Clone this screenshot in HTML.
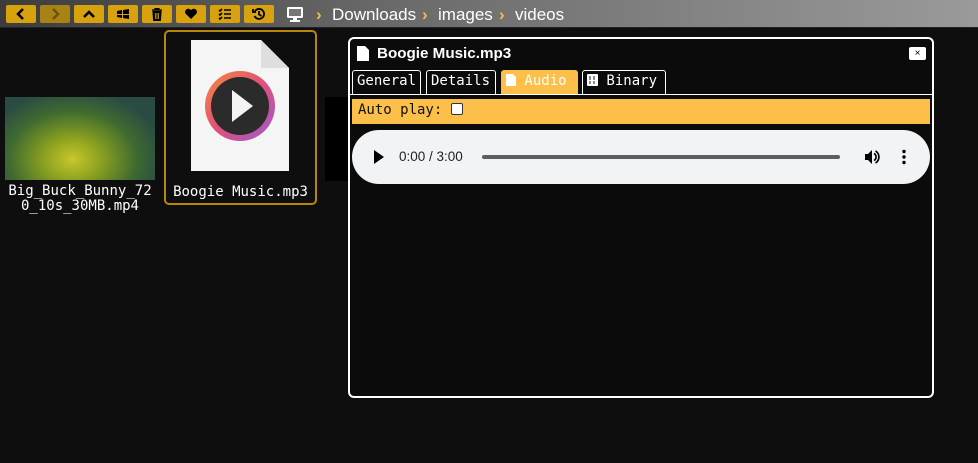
<!DOCTYPE html>
<html><head><style>
*{box-sizing:border-box;margin:0;padding:0}
body{width:978px;height:463px;background:#0e0e0e;overflow:hidden;position:relative;font-family:"Liberation Sans",sans-serif}
.bar{position:absolute;left:0;top:0;width:978px;height:28px;background:linear-gradient(90deg,#3c3c3c,#6a6a6a 40%,#8a8a8a 80%,#9a9a9a);border-bottom:1px solid #222}
.b{position:absolute;top:5px;width:30px;height:18px;background:#d8a20e;border-radius:2px;display:flex;align-items:center;justify-content:center}
.crumb{position:absolute;top:5px;color:#fff;font-size:17px}
.arr{position:absolute;top:5px;color:#f0c040;font-size:17px;font-weight:bold}
.mono{font-family:"DejaVu Sans Mono","Liberation Mono",monospace}
.dlg{position:absolute;left:348px;top:37px;width:586px;height:361px;border:2px solid #fff;border-radius:6px;background:#0b0b0b}
.tab{position:absolute;top:31px;height:24px;border:1px solid #fff;border-bottom:none;border-radius:3px 3px 0 0;color:#fff;font-size:14px;padding:2px 4px 0 4px;white-space:nowrap}
</style></head><body>
<div class="bar"></div>
<div class="b" style="left:6px"><svg width="10" height="12"><path d="M7 1L2 6L7 11" stroke="#000" stroke-width="2.5" fill="none"/></svg></div>
<div class="b" style="left:40px;background:#a88214"><svg width="10" height="12"><path d="M3 1L8 6L3 11" stroke="#6b5410" stroke-width="2.5" fill="none"/></svg></div>
<div class="b" style="left:74px"><svg width="12" height="10"><path d="M1 8L6 3L11 8" stroke="#000" stroke-width="2.5" fill="none"/></svg></div>
<div class="b" style="left:108px"><svg width="14" height="12"><path d="M1 3L6 2V6H1ZM7 2L13 1V6H7ZM1 7H6V10L1 9ZM7 7H13V11L7 10Z" fill="#000"/></svg></div>
<div class="b" style="left:142px"><svg width="12" height="13"><path d="M1 2H11M4 2V0.5H8V2M2 3.5H10L9.3 12.5H2.7Z" stroke="#000" stroke-width="1.2" fill="#000"/><path d="M4.5 5V11M6 5V11M7.5 5V11" stroke="#d8a20e" stroke-width="0.8"/></svg></div>
<div class="b" style="left:176px"><svg width="14" height="12"><path d="M7 11L1.5 5.5A3 3 0 0 1 7 2.3A3 3 0 0 1 12.5 5.5Z" fill="#000"/></svg></div>
<div class="b" style="left:210px"><svg width="14" height="12"><path d="M1 2L2 3L4 1M1 6L2 7L4 5M1 10L2 11L4 9M6 2H13M6 6H13M6 10H13" stroke="#000" stroke-width="1.6" fill="none"/></svg></div>
<div class="b" style="left:244px"><svg width="14" height="14"><path d="M3 4A5 5 0 1 1 2.5 9M1 2V5H4M7 4V7.5L9.5 9" stroke="#000" stroke-width="1.8" fill="none"/></svg></div>
<svg style="position:absolute;left:286px;top:6px" width="18" height="16"><rect x="1" y="1" width="16" height="11" rx="1.5" fill="#fff"/><rect x="3" y="3" width="12" height="7" fill="#777"/><rect x="7" y="12" width="4" height="2" fill="#fff"/><rect x="4" y="14" width="10" height="2" fill="#fff"/></svg>
<span class="arr" style="left:316px">›</span><span class="crumb" style="left:332px">Downloads</span>
<span class="arr" style="left:422px">›</span><span class="crumb" style="left:438px">images</span>
<span class="arr" style="left:499px">›</span><span class="crumb" style="left:515px">videos</span>

<div style="position:absolute;left:5px;top:97px;width:150px;height:83px;background:radial-gradient(ellipse at 45% 75%,#c8c82a 0,#8aa020 25%,#3e6a30 55%,#2a4a44 80%)"></div>
<div class="mono" style="position:absolute;left:0;top:184px;width:160px;text-align:center;color:#fff;font-size:14px;line-height:15px">Big_Buck_Bunny_72<br>0_10s_30MB.mp4</div>
<div style="position:absolute;left:325px;top:97px;width:25px;height:84px;background:#000"></div>

<div style="position:absolute;left:164px;top:30px;width:153px;height:175px;border:2px solid #b8860b;border-radius:5px"></div>
<svg style="position:absolute;left:191px;top:40px" width="99" height="132"><path d="M0 0H70L98 28V131H0Z" fill="#f5f5f5"/><path d="M70 0V28H98Z" fill="#dedede"/><defs><linearGradient id="g" x1="0" y1="0" x2="1" y2="1"><stop offset="0" stop-color="#f58a3a"/><stop offset=".5" stop-color="#e0507a"/><stop offset="1" stop-color="#9a5ad0"/></linearGradient></defs><circle cx="49" cy="66" r="35" fill="url(#g)"/><circle cx="49" cy="66" r="29" fill="#2b2b2b"/><path d="M41 50L62 66L41 82Z" fill="#f4f4f4"/></svg>
<div class="mono" style="position:absolute;left:164px;top:184px;width:153px;text-align:center;color:#fff;font-size:14px">Boogie Music.mp3</div>

<div class="dlg">
<svg style="position:absolute;left:7px;top:7px" width="12" height="15"><path d="M0 0H8L12 4V15H0Z" fill="#fff"/></svg>
<div style="position:absolute;left:27px;top:6px;color:#fff;font-weight:bold;font-size:15.2px">Boogie Music.mp3</div>
<div style="position:absolute;left:559px;top:8px;width:17px;height:13px;background:#fff;border-radius:2px;font-size:10px;text-align:center;line-height:13px">×</div>
<div class="tab mono" style="left:2px;width:69px">General</div>
<div class="tab mono" style="left:76px;width:70px">Details</div>
<div class="tab mono" style="left:151px;width:77px;background:#fbbf4a;color:#fff;border-color:#fbbf4a"><svg width="10" height="12" style="vertical-align:-1px"><path d="M0 0H7L10 3V12H0Z" fill="#fff"/></svg> Audio</div>
<div class="tab mono" style="left:232px;width:84px"><svg width="11" height="12" style="vertical-align:-1px"><rect width="11" height="12" rx="1" fill="#fff"/><path d="M3 2V6M7 2V6M3 7V10M7 7V10" stroke="#444" stroke-width="1.2"/></svg> Binary</div>
<div style="position:absolute;left:0;top:55px;width:582px;height:1px;background:#fff"></div>
<div class="mono" style="position:absolute;left:2px;top:60px;width:578px;height:25px;background:#fbbf4a;font-size:14px;padding:3px 0 0 6px;color:#111">Auto play: <span style="display:inline-block;width:12px;height:12px;border:1px solid #333;background:#fff;border-radius:2px;vertical-align:-1px"></span></div>
<div style="position:absolute;left:2px;top:91px;width:578px;height:54px;background:#f1f3f4;border-radius:27px">
<svg style="position:absolute;left:21px;top:20px" width="12" height="14"><path d="M1 0L11 7L1 14Z" fill="#000"/></svg>
<div style="position:absolute;left:47px;top:19px;font-size:13.5px;color:#222">0:00 / 3:00</div>
<div style="position:absolute;left:130px;top:25px;width:358px;height:4px;background:#5e5e5e;border-radius:2px"></div>
<svg style="position:absolute;left:512px;top:19px" width="16" height="16"><path d="M1 5H4L8 1V15L4 11H1Z" fill="#000"/><path d="M10 4.5A4 4 0 0 1 10 11.5M11.5 2A7 7 0 0 1 11.5 14" stroke="#000" stroke-width="1.7" fill="none"/></svg>
<svg style="position:absolute;left:550px;top:19px" width="4" height="16"><circle cx="2" cy="2.5" r="1.7"/><circle cx="2" cy="8" r="1.7"/><circle cx="2" cy="13.5" r="1.7"/></svg>
</div>
</div>
</body></html>
